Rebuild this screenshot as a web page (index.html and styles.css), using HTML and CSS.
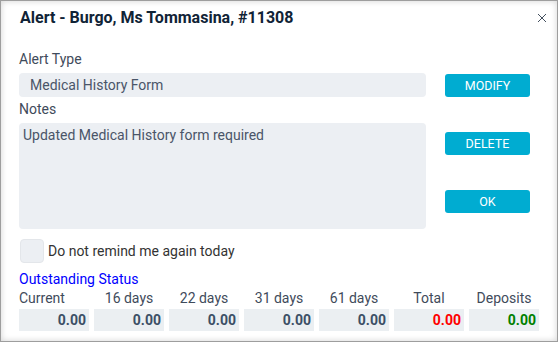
FILE: index.html
```html
<!DOCTYPE html>
<html>
<head>
    <title>Alert</title>
    <link rel="stylesheet" href="styles.css">
</head>
<body>

<div class="dialog">
    <div class="header">
        <h1>Alert - Burgo, Ms Tommasina, #11308</h1>
        <svg class="close" width="10" height="10" viewBox="0 0 10 10">
            <path d="M1 1 L9 9 M9 1 L1 9" stroke="#44505e" stroke-width="1" fill="none"/>
        </svg>
    </div>

    <div class="content">
        <div class="main">
            <div class="fields">
                <div class="label">Alert Type</div>
                <div class="input">Medical History Form</div>
                <div class="label notes-label">Notes</div>
                <div class="textarea">Updated Medical History form required</div>
            </div>
            <div class="buttons">
                <button class="btn">MODIFY</button>
                <button class="btn">DELETE</button>
                <button class="btn">OK</button>
            </div>
        </div>

        <label class="check-row">
            <span class="checkbox"></span>
            <span>Do not remind me again today</span>
        </label>

        <div class="status-title">Outstanding Status</div>
        <div class="status">
            <div class="col first"><div class="head">Current</div><div class="value">0.00</div></div>
            <div class="col"><div class="head">16 days</div><div class="value">0.00</div></div>
            <div class="col"><div class="head">22 days</div><div class="value">0.00</div></div>
            <div class="col"><div class="head">31 days</div><div class="value">0.00</div></div>
            <div class="col"><div class="head">61 days</div><div class="value">0.00</div></div>
            <div class="col"><div class="head">Total</div><div class="value red">0.00</div></div>
            <div class="col"><div class="head">Deposits</div><div class="value green">0.00</div></div>
        </div>
    </div>
</div>

</body>
</html>
```

FILE: styles.css
```css
body { margin: 0; background: #fff; font-family: Roboto, "Noto Sans", sans-serif; }
.dialog { width: 556px; height: 340px; border: 1px solid #9e9e9e; box-shadow: inset 0 0 6px rgba(0,0,0,0.18); background: #fff; }
.header { height: 33px; display: flex; align-items: center; justify-content: space-between; padding: 0 10px 0 19px; }
.header h1 { margin: 0; font-size: 16px; font-weight: bold; color: #102336; }
.close { margin-top: 1px; }
.content { padding: 15px 0 0 18px; }
.main { display: flex; }
.fields { width: 407px; }
.label { font-size: 14px; line-height: 20px; color: #3f4b5b; margin-bottom: 4px; }
.notes-label { margin-top: 2px; margin-bottom: 4px; }
.input { height: 24px; line-height: 24px; background: #eceff3; border-radius: 4px; padding-left: 11px; font-size: 14px; color: #4a5568; }
.textarea { height: 106px; background: #eceff3; border-radius: 4px; padding: 4px 4px 0; box-sizing: border-box; font-size: 14px; line-height: 16px; color: #4a5568; }
.buttons { display: flex; flex-direction: column; gap: 35px; margin-left: 19px; margin-top: 25px; }
.btn { width: 85px; height: 23px; border: none; border-radius: 3px; background: #00acd1; color: #fff; font-family: Roboto, sans-serif; font-size: 12.5px; font-weight: 400; padding: 0; }
.check-row { display: flex; align-items: center; margin-top: 10px; font-size: 14px; color: #333; }
.checkbox { width: 22px; height: 22px; background: #eceff3; border: 1px solid #e3e6ea; border-radius: 4px; margin-left: 1px; margin-right: 4px; }
.status-title { margin-top: 6px; font-size: 14px; line-height: 20px; color: #0000ff; }
.status { display: flex; gap: 5px; }
.col { width: 70px; }
.head { font-size: 14px; line-height: 18px; text-align: center; color: #3f4b5b; margin-bottom: 2px; }
.col.first .head { text-align: left; }
.value { height: 22px; line-height: 22px; background: #ebeff2; text-align: right; padding-right: 3px; font-size: 14px; font-weight: bold; color: #3b4f66; }
.value.red { color: #ff0000; }
.value.green { color: #008000; }
```
